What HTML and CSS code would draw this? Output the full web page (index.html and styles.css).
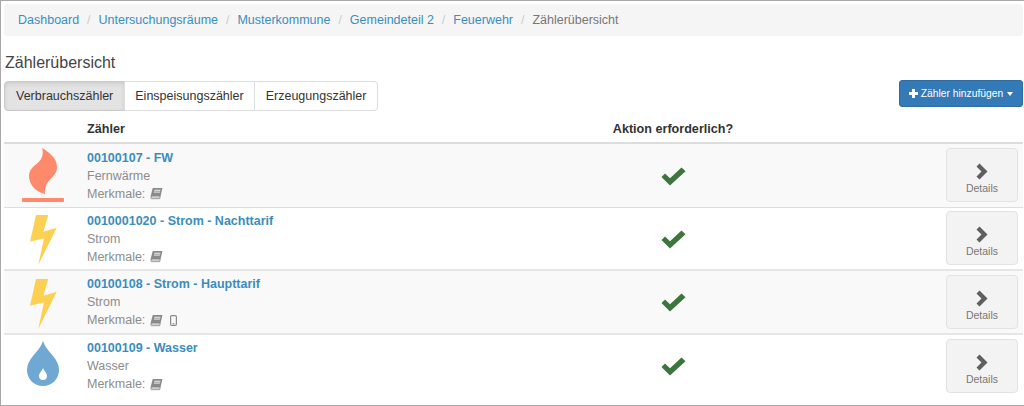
FILE: index.html
```html
<!DOCTYPE html>
<html lang="de">
<head>
<meta charset="utf-8">
<title>Zählerübersicht</title>
<link rel="stylesheet" href="styles.css">
</head>
<body>
<div class="frame">
  <nav class="crumbs">
    <a href="#">Dashboard</a><span class="sep">/</span>
    <a href="#">Untersuchungsräume</a><span class="sep">/</span>
    <a href="#">Musterkommune</a><span class="sep">/</span>
    <a href="#">Gemeindeteil 2</a><span class="sep">/</span>
    <a href="#">Feuerwehr</a><span class="sep">/</span>
    <span class="current">Zählerübersicht</span>
  </nav>
  <h1 class="title">Zählerübersicht</h1>
  <div class="toolbar">
    <div class="tabs">
      <button class="tab active">Verbrauchszähler</button><button class="tab">Einspeisungszähler</button><button class="tab">Erzeugungszähler</button>
    </div>
    <button class="add">
      <svg class="plus" viewBox="0 0 10 10" width="9" height="9"><path d="M3.4 0h3.2v3.4H10v3.2H6.600V10H3.400V6.600H0V3.400h3.400z" fill="#fff"/></svg>
      Zähler hinzufügen
      <span class="caret"></span>
    </button>
  </div>
  <div class="row head">
    <div></div><div class="h-name">Zähler</div><div class="h-action">Aktion erforderlich?</div><div></div>
  </div>

  <svg width="0" height="0" class="defs">
    <defs>
      <symbol id="book" viewBox="0 0 12 12">
        <path d="M3 1h8.500L9.500 9.500H1.200C.6 9.500.4 9 .6 8.400L2.200 2C2.300 1.400 2.600 1 3 1z" fill="#8a8a8a"/>
        <path d="M4 3h5.600M3.600 4.700h5.600" stroke="#f2f2f2" stroke-width=".9"/>
        <path d="M1.600 8.200h7.600L9 10.800H1.400C.8 10.800.6 10 1 9.400z" fill="#d0d0d0" stroke="#8a8a8a" stroke-width=".7"/>
      </symbol>
      <symbol id="check" viewBox="0 0 25 19">
        <path d="M0.500 10 4 6.500 9 11.300 20.500 0.500 24.500 4.300 9 18.500z" fill="#3c763d"/>
      </symbol>
      <symbol id="bolt" viewBox="0 0 27 50">
        <path d="M6 0H18.300L13.300 16.700 26.700 12.700 8.300 50 14 23.300 0 26.700z" fill="#fdd052"/>
      </symbol>
      <symbol id="chev" viewBox="0 0 12 17">
        <path d="M3.500 0.500 11.500 8.500 3.500 16.500 0.500 13.500 5.500 8.500 0.500 3.500z" fill="#5f5f5f"/>
      </symbol>
    </defs>
  </svg>

  <div class="row stripe">
    <div class="pic">
      <svg width="42" height="54" viewBox="0 0 42 54">
        <path d="M20 0C27 4 35 10 35 19C35 30 22 31 23 46C14 44 7 37 7 28C7 18 17 17 20 9C21 6 21 3 20 0z" fill="#ff8a6b"/>
        <rect x="0" y="50" width="42" height="4" rx="1" fill="#ff8a6b"/>
      </svg>
    </div>
    <div class="info">
      <a class="name" href="#">00100107 - FW</a>
      <div class="sub">Fernwärme</div>
      <div class="sub">Merkmale: <svg class="mini"><use href="#book"/></svg></div>
    </div>
    <div class="state"><svg class="check"><use href="#check"/></svg></div>
    <div class="go"><button class="details"><svg class="chev"><use href="#chev"/></svg><span>Details</span></button></div>
  </div>

  <div class="row thick">
    <div class="pic"><svg class="bolt"><use href="#bolt"/></svg></div>
    <div class="info">
      <a class="name" href="#">0010001020 - Strom - Nachttarif</a>
      <div class="sub">Strom</div>
      <div class="sub">Merkmale: <svg class="mini"><use href="#book"/></svg></div>
    </div>
    <div class="state"><svg class="check"><use href="#check"/></svg></div>
    <div class="go"><button class="details"><svg class="chev"><use href="#chev"/></svg><span>Details</span></button></div>
  </div>

  <div class="row stripe thick">
    <div class="pic"><svg class="bolt"><use href="#bolt"/></svg></div>
    <div class="info">
      <a class="name" href="#">00100108 - Strom - Haupttarif</a>
      <div class="sub">Strom</div>
      <div class="sub">Merkmale: <svg class="mini"><use href="#book"/></svg>
        <svg class="phone" viewBox="0 0 7 11"><rect x=".6" y=".6" width="5.800" height="9.800" rx="1.200" fill="none" stroke="#8a8a8a" stroke-width="1.200"/><path d="M2.500 8.800h2" stroke="#8a8a8a"/></svg>
      </div>
    </div>
    <div class="state"><svg class="check"><use href="#check"/></svg></div>
    <div class="go"><button class="details"><svg class="chev"><use href="#chev"/></svg><span>Details</span></button></div>
  </div>

  <div class="row">
    <div class="pic">
      <svg class="drop" viewBox="0 0 32 46">
        <path d="M16 0c2 6 6 10 10 15 4 5 6 9 6 14 0 9-7 16-16 16S0 38 0 29c0-5 2-9 6-14 4-5 8-9 10-15z" fill="#6fa8d2"/>
        <path d="M16 27c1 3 4 5 4 8a4 4 0 0 1-8 0c0-3 3-5 4-8z" fill="#fff"/>
      </svg>
    </div>
    <div class="info">
      <a class="name" href="#">00100109 - Wasser</a>
      <div class="sub">Wasser</div>
      <div class="sub">Merkmale: <svg class="mini"><use href="#book"/></svg></div>
    </div>
    <div class="state"><svg class="check"><use href="#check"/></svg></div>
    <div class="go"><button class="details"><svg class="chev"><use href="#chev"/></svg><span>Details</span></button></div>
  </div>
</div>
</body>
</html>
```
FILE: styles.css
```css
* { box-sizing: border-box; }
html, body { margin: 0; padding: 0; background: #fff; }
body {
  font-family: "Liberation Sans", Arial, sans-serif;
  font-size: 12px;
  color: #333;
}
.frame {
  width: 1024px;
  height: 406px;
  overflow: hidden;
  border: 1px solid #a8a8a8;
  border-right: 0;
  padding: 3px 1px 0 3px;
}
.defs { position: absolute; }
.crumbs {
  height: 32px;
  background: #f5f5f5;
  border-radius: 4px;
  padding: 0 14px;
  display: flex;
  align-items: center;
  font-size: 12.500px;
}
.crumbs a { color: #3c8dbc; text-decoration: none; }
.sep { color: #ccc; padding: 0 7.950px; }
.current { color: #777; }
.title {
  margin: 17px 0 0 1px;
  font-size: 16px;
  line-height: 20px;
  font-weight: 400;
  color: #444;
}
.toolbar {
  margin-top: 8px;
  height: 31px;
  display: flex;
  justify-content: space-between;
  align-items: flex-start;
}
.tabs { display: flex; }
.tab {
  height: 30px;
  padding: 0 10.500px;
  font: 12.500px "Liberation Sans", Arial, sans-serif;
  color: #333;
  background: #fff;
  border: 1px solid #ddd;
  margin-left: -1px;
}
.tab:first-child { margin-left: 0; padding-left: 11px; border-radius: 4px 0 0 4px; }
.tab:last-child { border-radius: 0 4px 4px 0; }
.tab.active {
  background: #e3e3e3;
  border-color: #c8c8c8;
  box-shadow: inset 0 2px 4px rgba(0,0,0,.1);
}
.add {
  height: 27px;
  width: 124px;
  margin-top: -1px;
  padding: 0;
  border: 1px solid #2e6da4;
  border-radius: 3px;
  background: #337ab7;
  color: #fff;
  font: 10.300px "Liberation Sans", Arial, sans-serif;
  display: flex;
  align-items: center;
  justify-content: center;
  gap: 3px;
}
.caret {
  border-top: 4px solid #fff;
  border-left: 3.500px solid transparent;
  border-right: 3.500px solid transparent;
  margin-left: 1px;
}
.row {
  display: grid;
  grid-template-columns: 78px 507px 172px 1fr;
  height: 63.500px;
  border-bottom: 1px solid #ddd;
  align-items: center;
}
.row.thick { border-bottom: 2px solid #e6e6e6; }
.row.head {
  height: 32px;
  border-bottom: 2px solid #ddd;
  font-weight: 700;
  font-size: 12.600px;
  padding-top: 3px;
  align-items: center;
}
.h-name { padding-left: 5px; }
.h-action { text-align: center; margin-left: -4px; white-space: nowrap; }
.row:last-child { border-bottom: 0; height: 62.500px; }
.stripe { background: #f9f9f9; }
.pic { display: flex; justify-content: center; align-items: center; }
.info { padding: 1px 0 0 5px; line-height: 18px; }
.name { color: #3c8dbc; font-weight: 700; text-decoration: none; font-size: 12.500px; display: block; }
.sub { color: #8c8c8c; font-size: 12.500px; display: flex; align-items: center; gap: 5px; }
.mini { width: 13px; height: 13px; }
.phone { width: 7px; height: 11px; margin-left: 2px; }
.bolt { width: 27px; height: 50px; margin-top: 4px; }
.drop { width: 32px; height: 46px; margin-bottom: 4px; }
.state { display: flex; justify-content: center; margin: 2px 0 0 -4px; }
.check { width: 25px; height: 19px; }
.go { display: flex; justify-content: flex-end; padding-right: 5px; }
.details {
  width: 72px;
  height: 54px;
  padding: 14px 0 0;
  background: #f3f3f3;
  border: 1px solid #e2e2e2;
  border-radius: 4px;
  display: flex;
  flex-direction: column;
  align-items: center;
  gap: 2px;
  color: #777;
  font: 10.500px "Liberation Sans", Arial, sans-serif;
}
.chev { width: 12px; height: 17px; }
```
